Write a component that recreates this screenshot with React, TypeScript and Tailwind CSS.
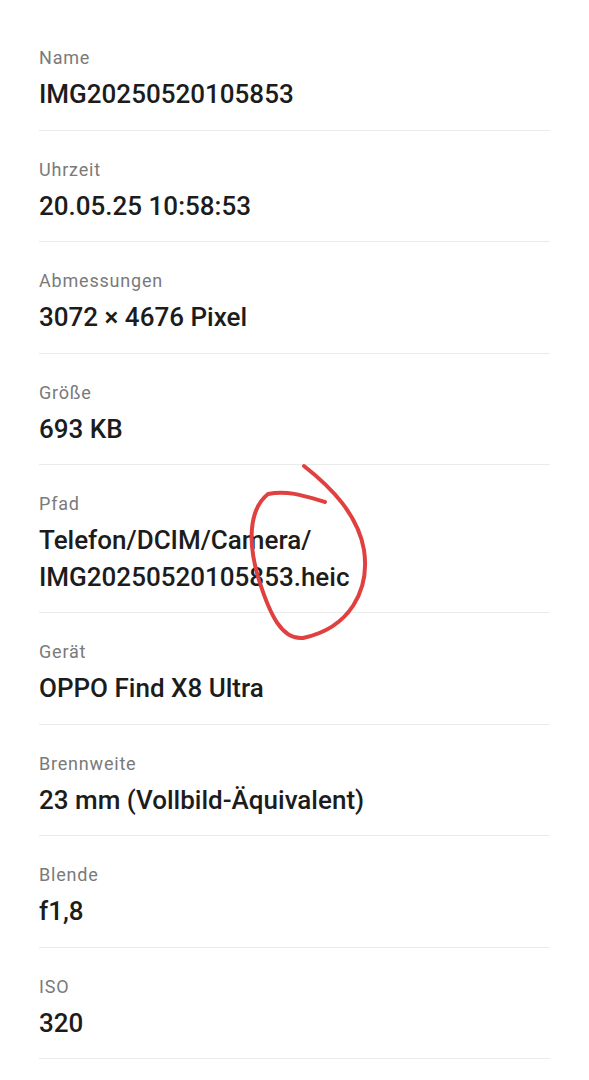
const rows: { label: string; value: string[] }[] = [
  { label: "Name", value: ["IMG20250520105853"] },
  { label: "Uhrzeit", value: ["20.05.25 10:58:53"] },
  { label: "Abmessungen", value: ["3072 × 4676 Pixel"] },
  { label: "Größe", value: ["693 KB"] },
  { label: "Pfad", value: ["Telefon/DCIM/Camera/", "IMG20250520105853.heic"] },
  { label: "Gerät", value: ["OPPO Find X8 Ultra"] },
  { label: "Brennweite", value: ["23 mm (Vollbild-Äquivalent)"] },
  { label: "Blende", value: ["f1,8"] },
  { label: "ISO", value: ["320"] },
];

export default function App() {
  return (
    <div className="relative w-[589px] h-[1080px] overflow-hidden bg-white font-['Roboto',sans-serif]">
      <div className="px-[39px] pt-[19px]">
        {rows.map((row) => (
          <div key={row.label} className="border-b border-[#ebebeb] pt-[27px] pb-[17px]">
            <div className="text-[18px] leading-[24px] tracking-[0.8px] text-[#7a7a7a]">{row.label}</div>
            <div className="mt-[6px] text-[26px] leading-[36.5px] font-medium text-[#1c1c1c]">
              {row.value.map((line) => (
                <div key={line}>{line}</div>
              ))}
            </div>
          </div>
        ))}
      </div>

      {/* red marker scribble */}
      <svg
        className="pointer-events-none absolute inset-0"
        width="589"
        height="1080"
        viewBox="0 0 589 1080"
        fill="none"
      >
        <path
          d="M304 466 C 332 488, 358 515, 364 550 C 370 590, 350 628, 303 638 C 282 640, 270 615, 259 580 C 248 545, 248 510, 268 494 C 288 490, 305 496, 325 502"
          stroke="#e0403f"
          strokeWidth="4"
          strokeLinecap="round"
          strokeLinejoin="round"
        />
      </svg>
    </div>
  );
}
